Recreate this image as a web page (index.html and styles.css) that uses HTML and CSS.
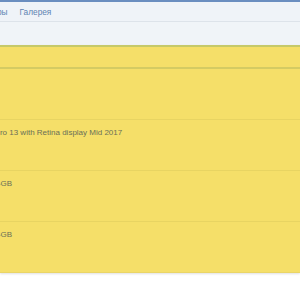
FILE: index.html
```html
<!DOCTYPE html>
<html lang="ru">
<head>
    <meta charset="UTF-8">
    <title>MacBook Pro</title>
    <link rel="stylesheet" href="styles.css">
</head>
<body>
    <div class="page">
        <div class="topbar">
            <nav class="menu">
                <a href="#">Товары</a>
                <a href="#">Галерея</a>
            </nav>
            <div class="subbar"></div>
        </div>

        <div class="panel">
            <div class="panel-head"></div>
            <div class="row"></div>
            <div class="row"><span class="cell">MacBook Pro 13 with Retina display Mid 2017</span></div>
            <div class="row"><span class="cell cell-value">4GB</span></div>
            <div class="row"><span class="cell cell-value">4GB</span></div>
        </div>
    </div>
</body>
</html>
```

FILE: styles.css
```css
body {
    margin: 0;
    background: #ffffff;
    font-family: 'Liberation Sans', Arial, sans-serif;
}

.page {
    width: 300px;
    height: 300px;
    overflow: hidden;
}

.topbar {
    border-top: 2px solid #6a8ec0;
    background: #eff3f8;
}

.menu {
    height: 19px;
    display: flex;
    align-items: center;
    gap: 12px;
    margin-left: -21px;
    border-bottom: 1px solid #dde3ea;
    font-size: 8.3px;
}

.menu a {
    color: #5e83b2;
    text-decoration: none;
}

.subbar {
    height: 23px;
    background: #f0f4f8;
}

.panel {
    background: #f5df69;
    border-top: 2px solid #c6c96a;
    box-shadow: 0 1px 2px rgba(0, 0, 0, 0.12);
}

.panel-head {
    height: 20px;
    border-bottom: 2px solid #d4cb63;
}

.row {
    height: 50px;
    border-bottom: 1px solid #e8d462;
    font-size: 8px;
    color: #6a7058;
}

.row:last-child {
    border-bottom: 1px solid #ead566;
}

.cell {
    display: block;
    padding-top: 8px;
    margin-left: -41px;
    white-space: nowrap;
}

.cell-value {
    margin-left: -4px;
}
```
